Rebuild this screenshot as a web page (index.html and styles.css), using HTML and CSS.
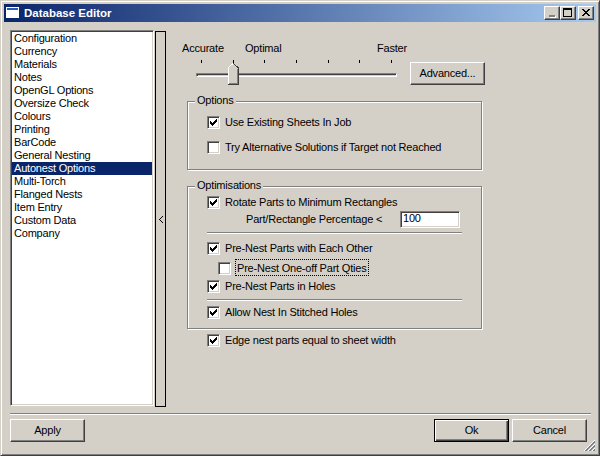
FILE: index.html
```html
<!DOCTYPE html>
<html>
<head>
<meta charset="utf-8">
<title>Database Editor</title>
<link rel="stylesheet" href="styles.css">
</head>
<body>
<div class="window">
  <div class="titlebar">
    <svg class="app-icon" width="14" height="12" viewBox="0 0 14 12" shape-rendering="crispEdges">
      <rect x="0.5" y="0.5" width="12" height="10" fill="#fff" stroke="#fff"/>
      <rect x="1" y="1" width="11" height="2" fill="#2a5cb8"/>
    </svg>
    <span class="title">Database Editor</span>
    <div class="caption-buttons">
      <span class="cbtn"><svg width="14" height="12" viewBox="0 0 14 12" shape-rendering="crispEdges"><rect x="4" y="8" width="6" height="2" fill="#808080"/><rect x="5" y="10" width="6" height="1" fill="#fff"/><rect x="10" y="9" width="1" height="1" fill="#fff"/></svg></span>
      <span class="cbtn"><svg width="14" height="12" viewBox="0 0 14 12" shape-rendering="crispEdges"><path d="M2 1h9v2h-9z M2 3h1v7h-1z M10 3h1v7h-1z M2 9h9v1h-9z" fill="#000"/></svg></span>
      <span class="cbtn close"><svg width="14" height="12" viewBox="0 0 14 12" shape-rendering="crispEdges"><path d="M3 2h2v1h-2z M9 2h2v1h-2z M4 3h2v1h-2z M8 3h2v1h-2z M5 4h4v1h-4z M6 5h2v1h-2z M5 6h4v1h-4z M4 7h2v1h-2z M8 7h2v1h-2z M3 8h2v1h-2z M9 8h2v1h-2z" fill="#000"/></svg></span>
    </div>
  </div>
  <div class="client">
    <div class="main">
      <div class="list">
        <div class="item">Configuration</div>
        <div class="item">Currency</div>
        <div class="item">Materials</div>
        <div class="item">Notes</div>
        <div class="item">OpenGL Options</div>
        <div class="item">Oversize Check</div>
        <div class="item">Colours</div>
        <div class="item">Printing</div>
        <div class="item">BarCode</div>
        <div class="item">General Nesting</div>
        <div class="item sel">Autonest Options</div>
        <div class="item">Multi-Torch</div>
        <div class="item">Flanged Nests</div>
        <div class="item">Item Entry</div>
        <div class="item">Custom Data</div>
        <div class="item">Company</div>
      </div>
      <div class="splitter">
        <svg width="4" height="7" viewBox="0 0 4 7" shape-rendering="crispEdges"><path d="M3 0h1v1h-1z M2 1h1v1h-1z M1 2h1v1h-1z M0 3h1v1h-1z M1 4h1v1h-1z M2 5h1v1h-1z M3 6h1v1h-1z" fill="#000"/></svg>
      </div>
      <div class="pane">
        <div class="slider-labels">
          <span class="lbl-acc">Accurate</span>
          <span class="lbl-opt">Optimal</span>
          <span class="lbl-fast">Faster</span>
        </div>
        <div class="slider-row">
          <div class="trackbox">
            <div class="ticks"><i></i><i></i><i></i><i></i><i></i><i></i><i></i></div>
            <div class="track"></div>
            <svg class="thumb" width="11" height="22" viewBox="0 0 11 22" shape-rendering="crispEdges">
              <path d="M0 5 L5 0 L10 5 V21 H0 Z" fill="#d4d0c8"/>
              <path d="M0.5 21 V4.5 L5 0.5" stroke="#fff" fill="none"/>
              <path d="M5.5 0.5 L10.5 5 V21.5 H0" stroke="#404040" fill="none"/>
              <path d="M9.5 5.5 V20.5 H1" stroke="#808080" fill="none"/>
            </svg>
          </div>
          <button class="btn advanced">Advanced...</button>
        </div>

        <div class="group options">
          <span class="legend">Options</span>
          <div class="row"><span class="cb"><svg width="7" height="7" viewBox="0 0 7 7" shape-rendering="crispEdges"><path d="M6 0h1v1h-1z M5 1h2v1h-2z M0 2h1v1h-1z M4 2h3v1h-3z M0 3h2v1h-2z M3 3h3v1h-3z M0 4h5v1h-5z M1 5h3v1h-3z M2 6h1v1h-1z" fill="#000"/></svg></span><span class="lbl">Use Existing Sheets In Job</span></div>
          <div class="row gap12"><span class="cb"></span><span class="lbl">Try Alternative Solutions if Target not Reached</span></div>
        </div>

        <div class="group optim">
          <span class="legend">Optimisations</span>
          <div class="row"><span class="cb"><svg width="7" height="7" viewBox="0 0 7 7" shape-rendering="crispEdges"><path d="M6 0h1v1h-1z M5 1h2v1h-2z M0 2h1v1h-1z M4 2h3v1h-3z M0 3h2v1h-2z M3 3h3v1h-3z M0 4h5v1h-5z M1 5h3v1h-3z M2 6h1v1h-1z" fill="#000"/></svg></span><span class="lbl">Rotate Parts to Minimum Rectangles</span></div>
          <div class="edit-row">
            <span class="edit-lbl">Part/Rectangle Percentage &lt;</span>
            <span class="edit">100</span>
          </div>
          <div class="sep sep1"></div>
          <div class="row m8"><span class="cb"><svg width="7" height="7" viewBox="0 0 7 7" shape-rendering="crispEdges"><path d="M6 0h1v1h-1z M5 1h2v1h-2z M0 2h1v1h-1z M4 2h3v1h-3z M0 3h2v1h-2z M3 3h3v1h-3z M0 4h5v1h-5z M1 5h3v1h-3z M2 6h1v1h-1z" fill="#000"/></svg></span><span class="lbl">Pre-Nest Parts with Each Other</span></div>
          <div class="row sub"><span class="cb"></span><span class="lbl focus">Pre-Nest One-off Part Qties</span></div>
          <div class="row m5"><span class="cb"><svg width="7" height="7" viewBox="0 0 7 7" shape-rendering="crispEdges"><path d="M6 0h1v1h-1z M5 1h2v1h-2z M0 2h1v1h-1z M4 2h3v1h-3z M0 3h2v1h-2z M3 3h3v1h-3z M0 4h5v1h-5z M1 5h3v1h-3z M2 6h1v1h-1z" fill="#000"/></svg></span><span class="lbl">Pre-Nest Parts in Holes</span></div>
          <div class="sep sep2"></div>
          <div class="row m5"><span class="cb"><svg width="7" height="7" viewBox="0 0 7 7" shape-rendering="crispEdges"><path d="M6 0h1v1h-1z M5 1h2v1h-2z M0 2h1v1h-1z M4 2h3v1h-3z M0 3h2v1h-2z M3 3h3v1h-3z M0 4h5v1h-5z M1 5h3v1h-3z M2 6h1v1h-1z" fill="#000"/></svg></span><span class="lbl">Allow Nest In Stitched Holes</span></div>
        </div>

        <div class="row edge"><span class="cb"><svg width="7" height="7" viewBox="0 0 7 7" shape-rendering="crispEdges"><path d="M6 0h1v1h-1z M5 1h2v1h-2z M0 2h1v1h-1z M4 2h3v1h-3z M0 3h2v1h-2z M3 3h3v1h-3z M0 4h5v1h-5z M1 5h3v1h-3z M2 6h1v1h-1z" fill="#000"/></svg></span><span class="lbl">Edge nest parts equal to sheet width</span></div>
      </div>
    </div>
    <div class="separator"></div>
    <div class="buttons">
      <button class="btn">Apply</button>
      <button class="btn default ok">Ok</button>
      <button class="btn cancel">Cancel</button>
    </div>
    <svg class="grip" width="12" height="12" viewBox="0 0 12 12" shape-rendering="crispEdges">
      <path d="M11 0 L0 11 M11 4 L4 11 M11 8 L8 11" stroke="#fff" fill="none"/>
      <path d="M11 1 L1 11 M11 2 L2 11 M11 5 L5 11 M11 6 L6 11 M11 9 L9 11 M11 10 L10 11" stroke="#808080" fill="none"/>
    </svg>
  </div>
</div>
</body>
</html>
```
FILE: styles.css
```css
body {
  margin: 0;
  font-family: "Liberation Sans", Arial, sans-serif;
  font-size: 11px;
  letter-spacing: -0.2px;
  color: #000;
}

.window {
  width: 600px;
  height: 456px;
  box-sizing: border-box;
  border: 1px solid;
  border-color: #d4d0c8 #404040 #404040 #d4d0c8;
  box-shadow: inset 1px 1px 0 #fff, inset -1px -1px 0 #808080;
  padding: 3px;
  background: #d4d0c8;
  display: flex;
  flex-direction: column;
}

/* title bar */
.titlebar {
  flex: none;
  height: 18px;
  display: flex;
  align-items: center;
  background: linear-gradient(90deg, #0a246a, #a6caf0);
  color: #fff;
}
.app-icon {
  display: block;
  margin-left: 2px;
}
.title {
  margin-left: 4px;
  font-weight: bold;
  font-size: 11.5px;
  letter-spacing: 0;
  line-height: 18px;
}
.caption-buttons {
  margin-left: auto;
  margin-right: 2px;
  display: flex;
}
.cbtn {
  width: 16px;
  height: 14px;
  box-sizing: border-box;
  border: 1px solid;
  border-color: #fff #404040 #404040 #fff;
  box-shadow: inset -1px -1px 0 #808080;
  background: #d4d0c8;
}
.cbtn svg {
  display: block;
}
.cbtn.close {
  margin-left: 2px;
}

/* client */
.client {
  flex: 1;
  position: relative;
  padding: 8px 9px 0 6px;
  display: flex;
  flex-direction: column;
}
.main {
  flex: none;
  display: flex;
  height: 377px;
}

.list {
  width: 144px;
  height: 376px;
  box-sizing: border-box;
  border: 1px solid;
  border-color: #808080 #fff #fff #808080;
  box-shadow: inset 1px 1px 0 #404040, inset -1px -1px 0 #d4d0c8;
  background: #fff;
  padding: 1px;
}
.item {
  height: 13px;
  line-height: 13px;
  padding-left: 2px;
  white-space: nowrap;
}
.item.sel {
  background: #0a246a;
  color: #fff;
}

.splitter {
  width: 11px;
  height: 376px;
  margin: 1px 0 0 1px;
  box-sizing: border-box;
  border: 1px solid #000;
  display: flex;
  align-items: center;
  justify-content: center;
}
.splitter svg {
  display: block;
}

.pane {
  flex: 1;
}

/* slider */
.slider-labels {
  display: flex;
  margin: 12px 0 0 16px;
  width: 225px;
  line-height: 13px;
  white-space: nowrap;
}
.lbl-acc {
  width: 63px;
}
.lbl-fast {
  margin-left: auto;
}
.slider-row {
  display: flex;
  align-items: flex-start;
  margin-top: 5px;
}
.trackbox {
  position: relative;
  width: 201px;
  height: 26px;
  margin-left: 30px;
}
.ticks {
  display: flex;
  justify-content: space-between;
  width: 191px;
  height: 3px;
  margin-left: 5px;
}
.ticks i {
  display: block;
  width: 1px;
  height: 3px;
  background: #000;
}
.track {
  margin-top: 10px;
  height: 4px;
  box-sizing: border-box;
  border: 1px solid;
  border-color: #808080 #fff #fff #808080;
  box-shadow: inset 1px 1px 0 #404040;
  background: #d4d0c8;
}
.thumb {
  position: absolute;
  left: 32px;
  top: 3px;
  display: block;
}

.btn {
  width: 75px;
  height: 23px;
  box-sizing: border-box;
  padding: 0;
  margin: 0;
  border: 1px solid;
  border-color: #fff #404040 #404040 #fff;
  box-shadow: inset -1px -1px 0 #808080;
  background: #d4d0c8;
  font-family: "Liberation Sans", Arial, sans-serif;
  font-size: 11px;
  letter-spacing: -0.2px;
  color: #000;
  line-height: 13px;
}
.btn.default {
  border: 1px solid #000;
  box-shadow: inset 1px 1px 0 #fff, inset -1px -1px 0 #404040, inset -2px -2px 0 #808080;
}
.advanced {
  margin: 2px 0 0 13px;
}

/* group boxes */
.group {
  position: relative;
  width: 295px;
  margin-left: 21px;
  box-sizing: border-box;
  border: 1px solid #808080;
  box-shadow: inset 1px 1px 0 #fff, 1px 1px 0 #fff;
  padding-left: 19px;
}
.legend {
  position: absolute;
  top: -8px;
  left: 7px;
  padding: 0 2px;
  line-height: 13px;
  background: #d4d0c8;
  white-space: nowrap;
}
.options {
  margin-top: 15px;
  height: 69px;
  padding-top: 14px;
}
.optim {
  margin-top: 16px;
  padding-top: 9px;
  padding-bottom: 9px;
}

.row {
  display: flex;
  align-items: center;
  height: 13px;
  line-height: 13px;
  white-space: nowrap;
}
.row.gap12 { margin-top: 12px; }
.row.m8 { margin-top: 8px; }
.row.m5 { margin-top: 5px; }
.row.sub {
  margin-top: 7px;
  margin-left: 11px;
}
.row.edge {
  margin: 5px 0 0 41px;
}
.lbl {
  margin-left: 5px;
}
.lbl.focus {
  box-sizing: border-box;
  border: 1px dotted #000;
  padding: 2px 1px 0 1px;
  margin: -3px 0 -1px 4px;
  line-height: 13px;
}

.cb {
  flex: none;
  width: 13px;
  height: 13px;
  box-sizing: border-box;
  border: 1px solid;
  border-color: #808080 #fff #fff #808080;
  box-shadow: inset 1px 1px 0 #404040, inset -1px -1px 0 #d4d0c8;
  background: #fff;
}
.cb svg {
  display: block;
  margin: 2px;
}

.edit-row {
  display: flex;
  align-items: center;
  margin: 2px 0 0 39px;
  height: 17px;
  white-space: nowrap;
}
.edit-lbl {
  width: 154px;
  line-height: 13px;
}
.edit {
  width: 60px;
  height: 17px;
  box-sizing: border-box;
  border: 1px solid;
  border-color: #808080 #fff #fff #808080;
  box-shadow: inset 1px 1px 0 #404040, inset -1px -1px 0 #d4d0c8;
  background: #fff;
  padding-left: 2px;
  line-height: 12px;
}

.sep {
  width: 255px;
  height: 0;
  border-top: 1px solid #808080;
  border-bottom: 1px solid #fff;
}
.sep1 { margin-top: 4px; }
.sep2 { margin-top: 6px; }

/* bottom */
.separator {
  flex: none;
  margin: 6px -4px 0 0;
  height: 0;
  border-top: 1px solid #808080;
  border-bottom: 1px solid #fff;
}
.buttons {
  flex: none;
  display: flex;
  margin-top: 4px;
}
.ok {
  margin-left: auto;
}
.cancel {
  margin-left: 3px;
}
.grip {
  position: absolute;
  right: 0;
  bottom: 0;
  display: block;
}
```
